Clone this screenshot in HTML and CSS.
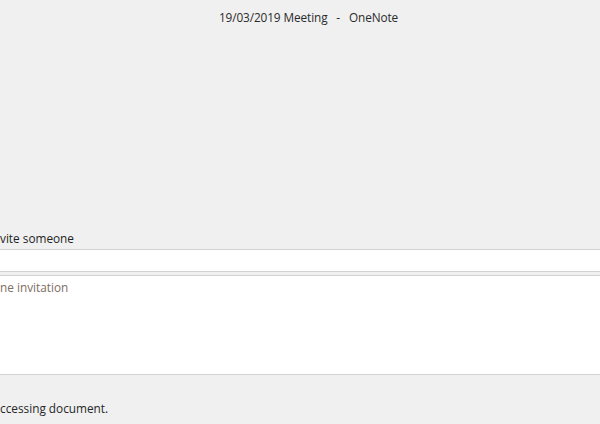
FILE: index.html
```html
<!DOCTYPE html>
<html>
<head>
<meta charset="utf-8">
<link rel="stylesheet" href="styles.css">
</head>
<body>
<div class="window">
  <div class="titlebar">19/03/2019 Meeting &nbsp;&nbsp;-&nbsp;&nbsp; OneNote</div>
  <div class="content">
    <div class="label">vite someone</div>
    <div class="input"></div>
    <div class="textarea"><span class="placeholder">ne invitation</span></div>
  </div>
  <div class="status"><span class="status-text">ccessing document.</span></div>
</div>
</body>
</html>
```
FILE: styles.css
```css
html, body {
  margin: 0;
  padding: 0;
}
body {
  width: 600px;
  height: 424px;
  overflow: hidden;
  background: #f0f0f0;
  font-family: "Open Sans", "Noto Sans", sans-serif;
}
.window {
  display: flex;
  flex-direction: column;
  height: 424px;
}
.titlebar {
  height: 34px;
  line-height: 34px;
  text-align: center;
  font-size: 11.8px;
  letter-spacing: -0.1px;
  color: #2b2b2b;
  padding-left: 17px;
  white-space: pre;
}
.content {
  padding-top: 196px;
  display: flex;
  flex-direction: column;
}
.label {
  font-size: 11.8px;
  color: #1e1e1e;
  line-height: 16px;
  height: 19px;
}
.input {
  height: 21px;
  background: #fff;
  border-top: 1px solid #d2d2d2;
  border-bottom: 1px solid #d2d2d2;
}
.textarea {
  margin-top: 3px;
  height: 100px;
  background: #fff;
  border-top: 1px solid #d2d2d2;
  border-bottom: 1px solid #d2d2d2;
  padding-top: 3px;
  box-sizing: border-box;
  overflow: hidden;
}
.placeholder {
  display: block;
  font-size: 11.8px;
  line-height: 16px;
  color: #7d6e62;
  white-space: nowrap;
}
.status {
  padding-top: 25px;
}
.status-text {
  display: block;
  font-size: 11.8px;
  line-height: 16px;
  color: #262626;
  white-space: nowrap;
}
```
